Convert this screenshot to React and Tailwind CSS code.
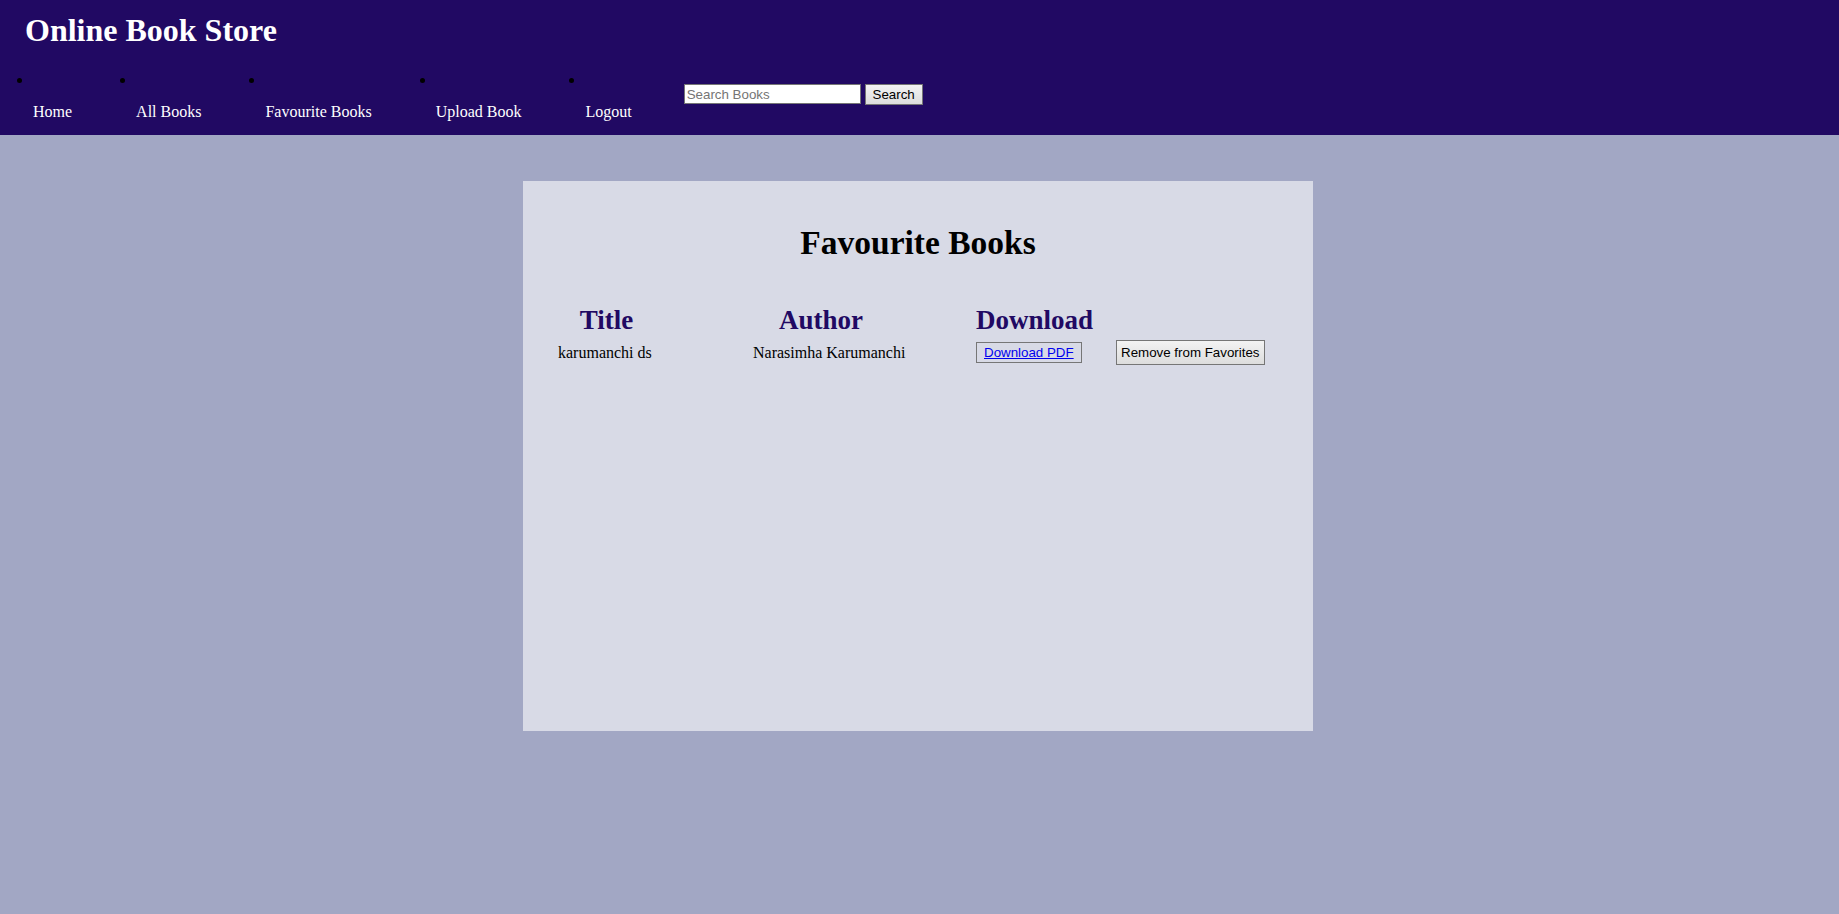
import React from "react";

const serif = { fontFamily: '"Liberation Serif", "Times New Roman", serif' };
const sans = { fontFamily: '"Liberation Sans", Arial, sans-serif' };

function NavItem({ label }) {
  return (
    <li className="flex flex-col pr-[48px]">
      <span className="block w-[5px] h-[5px] rounded-full bg-black" />
      <a className="block ml-[16px] mt-[20px] text-[16px] leading-[18px] text-white cursor-pointer" style={serif}>
        {label}
      </a>
    </li>
  );
}

export default function App() {
  return (
    <div className="min-h-[914px] w-full bg-[#a2a7c4]" style={serif}>
      <header className="bg-[#210963] pt-[12px] pb-[14px]">
        <h1 className="pl-[25px] text-[32px] leading-[36px] font-bold text-white" style={serif}>
          Online Book Store
        </h1>
        <nav className="mt-[30px] flex items-start pl-[17px]">
          <ul className="flex items-start">
            <NavItem label="Home" />
            <NavItem label="All Books" />
            <NavItem label="Favourite Books" />
            <NavItem label="Upload Book" />
            <NavItem label="Logout" />
          </ul>
          <form className="flex items-start mt-[6px] ml-[4px]" onSubmit={(e) => e.preventDefault()}>
            <input
              type="text"
              placeholder="Search Books"
              className="w-[177px] h-[20px] border border-[#767676] bg-white px-[2px] text-[13.33px] text-black placeholder:text-[#757575] outline-none"
              style={sans}
            />
            <button
              type="submit"
              className="ml-[4px] w-[58px] h-[21px] border border-[#767676] bg-gradient-to-b from-[#f3f3f3] to-[#dddddd] text-[13.33px] leading-[15px] text-black"
              style={sans}
            >
              Search
            </button>
          </form>
        </nav>
      </header>

      <main className="pt-[46px]">
        <section className="ml-[523px] w-[790px] h-[550px] bg-[#d8dae6]">
          <h2 className="pt-[43px] text-center text-[33.5px] leading-[38px] font-bold text-black" style={serif}>
            Favourite Books
          </h2>
          <div className="mt-[43px] ml-[35px] grid grid-cols-[195px_223px_140px_149px]">
            <div className="w-[97px] text-center text-[27px] leading-[31px] font-bold text-[#210963]">Title</div>
            <div className="pl-[26px] text-[27px] leading-[31px] font-bold text-[#210963]">Author</div>
            <div className="text-[27px] leading-[31px] font-bold text-[#210963] whitespace-nowrap">Download</div>
            <div />

            <div className="mt-[4px] h-[25px] flex items-center text-[16px] leading-[18px] text-black">karumanchi ds</div>
            <div className="mt-[4px] h-[25px] flex items-center text-[16px] leading-[18px] text-black whitespace-nowrap">
              Narasimha Karumanchi
            </div>
            <div className="mt-[4px] h-[25px] flex items-center">
              <a
                className="inline-block border border-[#767676] px-[7px] py-[2px] text-[13.33px] leading-[15px] text-[#0000ee] underline whitespace-nowrap cursor-pointer"
                style={sans}
              >
                Download PDF
              </a>
            </div>
            <div className="mt-[4px] h-[25px] flex items-center">
              <button
                className="h-[25px] border border-[#767676] bg-gradient-to-b from-[#f3f3f3] to-[#dddddd] px-[4px] text-[13.33px] leading-[15px] text-black whitespace-nowrap"
                style={sans}
              >
                Remove from Favorites
              </button>
            </div>
          </div>
        </section>
      </main>
    </div>
  );
}
